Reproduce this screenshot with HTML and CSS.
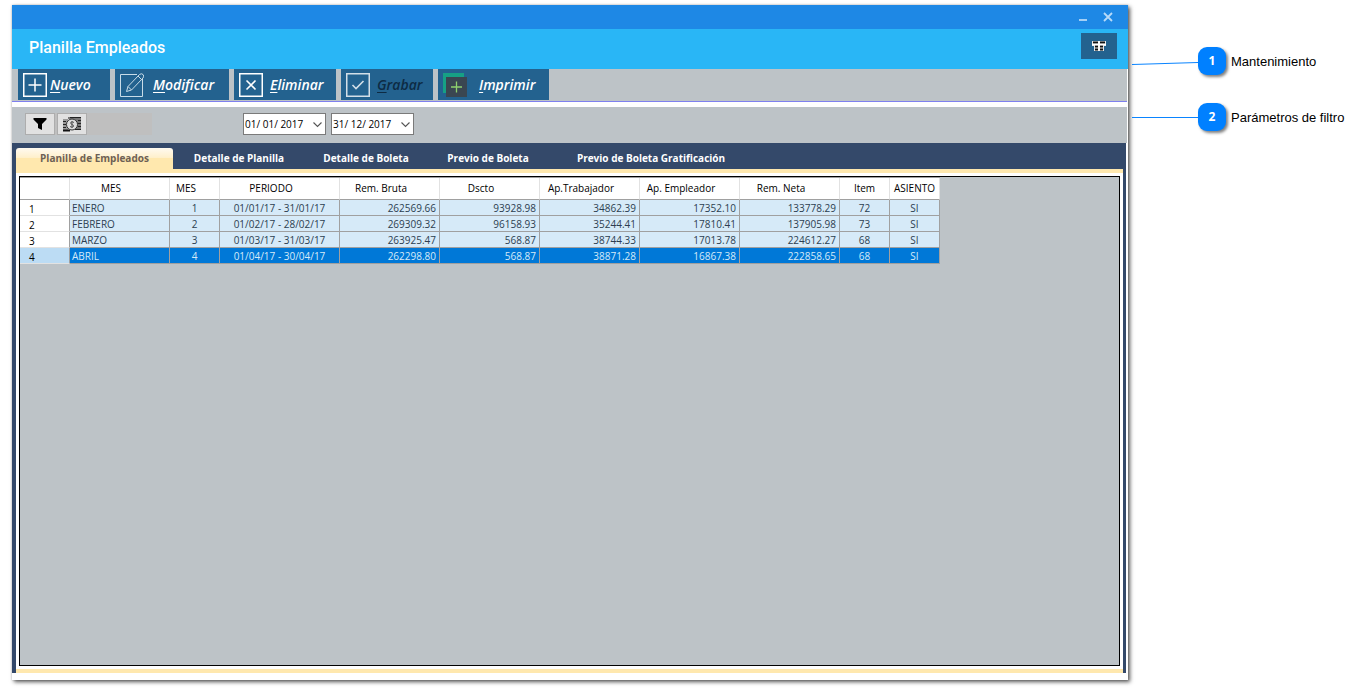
FILE: index.html
```html
<!DOCTYPE html>
<html lang="es">
<head>
<meta charset="utf-8">
<title>Planilla Empleados</title>
<link rel="stylesheet" href="styles.css">
</head>
<body>
<main class="window">
  <div class="titlebar">
    <button class="win-btn" aria-label="Minimizar"><svg width="10" height="10" viewBox="0 0 10 10"><path d="M1 8H9" stroke="#a5cff5" stroke-width="2"/></svg></button>
    <button class="win-btn" aria-label="Cerrar"><svg width="10" height="10" viewBox="0 0 10 10"><path d="M1 1L9 9M9 1L1 9" stroke="#b7daf8" stroke-width="1.8"/></svg></button>
  </div>
  <header class="header">
    <h1 class="heading">Planilla Empleados</h1>
    <button class="layout-btn" aria-label="Columnas">
      <svg width="14" height="10" viewBox="0 0 14 10"><path d="M0 0H14V5H12V10H2V5H0Z" fill="#e8e8e8"/><path d="M1 1.500H6M8 1.500H13M3 5.500H6M8 5.500H11M3 8.500H6M8 8.500H11" stroke="#111" stroke-width="2"/><path d="M0 3.500H14M7 0V10" stroke="#fff" stroke-width="1.4"/></svg>
    </button>
  </header>
  <div class="toolbar">
    <button class="tool tool-new">
      <svg width="24" height="24" viewBox="0 0 24 24" fill="none" stroke="#fff"><rect x=".75" y=".75" width="22.5" height="22.5" stroke-width="1.5"/><path d="M12 5.500V18.500M5.500 12H18.500" stroke-width="1.5"/></svg>
      <span><u>N</u>uevo</span>
    </button>
    <button class="tool tool-edit">
      <svg width="24" height="24" viewBox="0 0 24 24" fill="none" stroke="#c9dce8"><path d="M17 1.500H.5V23.500H22.500V6"/><path d="M6.500 18.500L8 13.500L19.500 1.500Q21.500 0 23 1.500T23 5L11.500 17Z M8 13.500L11.500 17M18 3L21.500 6.500"/></svg>
      <span><u>M</u>odificar</span>
    </button>
    <button class="tool tool-delete">
      <svg width="24" height="24" viewBox="0 0 24 24" fill="none" stroke="#fff"><rect x=".75" y=".75" width="22.5" height="22.5" stroke-width="1.5"/><path d="M7.500 7.500L16.500 16.500M16.500 7.500L7.500 16.500" stroke-width="1.6"/></svg>
      <span><u>E</u>liminar</span>
    </button>
    <button class="tool tool-save" disabled>
      <svg width="24" height="24" viewBox="0 0 24 24" fill="none" stroke="#d3dfe8"><rect x=".75" y=".75" width="22.5" height="22.5" stroke-width="1.5"/><path d="M6.500 12L10 15.500L17.500 8" stroke-width="1.6"/></svg>
      <span><u>G</u>rabar</span>
    </button>
    <button class="tool tool-print">
      <svg width="24" height="24" viewBox="0 0 24 24"><path d="M0 0H21V4H3V20H0Z" fill="#16a085"/><rect x="3" y="4" width="21" height="20" fill="#3a4651"/><path d="M13.500 8.500V19.500M8 14H19" stroke="#8ed16f" stroke-width="1.3"/></svg>
      <span><u>I</u>mprimir</span>
    </button>
  </div>
  <div class="filters">
    <div class="filter-group">
      <button class="filter-btn" aria-label="Filtrar"><svg width="14" height="14" viewBox="0 0 14 14"><path d="M.5 1H13.500V2.500L9 7V13L5 11V7L.5 2.500Z" fill="#000"/></svg></button>
      <button class="filter-btn" aria-label="Pagos"><svg width="18" height="15" viewBox="0 0 18 15"><path d="M5 0H18V12H12V2H5Z" fill="#777"/><path d="M0 2H5V13H0Z" fill="#999"/><path d="M0 13.500H7" stroke="#111" stroke-width="2"/><path d="M7 .5H18M15 3.500H18M15 6.500H18M15 9.500H18M12 12.500H18M0 4.500H3M0 7.500H3M0 10.500H3" stroke="#222"/><circle cx="9" cy="7.500" r="5.500" fill="#ddd" stroke="#333"/><path d="M11 5.500Q9 4 7.700 5.500Q7.500 7 9 7.500Q11 8 10.500 9.500Q9 11 7 9.500M9 4V11" fill="none" stroke="#555"/></svg></button>
    </div>
    <div class="dates">
      <div class="date">
        <select aria-label="Fecha inicial"><option>01/ 01/ 2017</option></select>
        <svg width="9" height="6" viewBox="0 0 9 6"><path d="M.5 .5L4.500 4.500L8.500 .5" fill="none" stroke="#555" stroke-width="1.1"/></svg>
      </div>
      <div class="date">
        <select aria-label="Fecha final"><option>31/ 12/ 2017</option></select>
        <svg width="9" height="6" viewBox="0 0 9 6"><path d="M.5 .5L4.500 4.500L8.500 .5" fill="none" stroke="#555" stroke-width="1.1"/></svg>
      </div>
    </div>
  </div>
  <section class="workspace">
    <div class="tabs" role="tablist">
      <button class="tab tab-list active" role="tab" aria-selected="true">Planilla de Empleados</button>
      <button class="tab tab-detail" role="tab">Detalle de Planilla</button>
      <button class="tab" role="tab">Detalle de Boleta</button>
      <button class="tab" role="tab">Previo de Boleta</button>
      <button class="tab tab-bonus" role="tab">Previo de Boleta Gratificación</button>
    </div>
    <div class="panel">
      <div class="grid">
        <table class="payroll">
          <colgroup><col class="w-narrow"><col class="w-wide"><col class="w-narrow"><col class="w-period"><col class="w-wide"><col class="w-wide"><col class="w-wide"><col class="w-wide"><col class="w-wide"><col class="w-narrow"><col class="w-narrow"></colgroup>
          <thead>
            <tr><th></th><th class="sortable">MES</th><th class="sortable">MES</th><th class="sortable">PERIODO</th><th class="sortable">Rem. Bruta</th><th class="sortable">Dscto</th><th class="sortable">Ap.Trabajador</th><th class="sortable">Ap. Empleador</th><th class="sortable">Rem. Neta</th><th>Item</th><th>ASIENTO</th></tr>
          </thead>
          <tbody>
            <tr><th scope="row">1</th><td class="text">ENERO</td><td>1</td><td>01/01/17 - 31/01/17</td><td class="num">262569.66</td><td class="num">93928.98</td><td class="num">34862.39</td><td class="num">17352.10</td><td class="num">133778.29</td><td>72</td><td>SI</td></tr>
            <tr><th scope="row">2</th><td class="text">FEBRERO</td><td>2</td><td>01/02/17 - 28/02/17</td><td class="num">269309.32</td><td class="num">96158.93</td><td class="num">35244.41</td><td class="num">17810.41</td><td class="num">137905.98</td><td>73</td><td>SI</td></tr>
            <tr><th scope="row">3</th><td class="text">MARZO</td><td>3</td><td>01/03/17 - 31/03/17</td><td class="num">263925.47</td><td class="num">568.87</td><td class="num">38744.33</td><td class="num">17013.78</td><td class="num">224612.27</td><td>68</td><td>SI</td></tr>
            <tr class="selected"><th scope="row">4</th><td class="text">ABRIL</td><td>4</td><td>01/04/17 - 30/04/17</td><td class="num">262298.80</td><td class="num">568.87</td><td class="num">38871.28</td><td class="num">16867.38</td><td class="num">222858.65</td><td>68</td><td>SI</td></tr>
          </tbody>
        </table>
      </div>
    </div>
  </section>
</main>
<aside class="notes">
  <div class="note">
    <svg width="66" height="28" viewBox="0 0 66 28"><path d="M0 17.500L66 15.500" stroke="#0a84ff" stroke-width="1.1"/></svg>
    <span class="badge">1</span><span class="note-text">Mantenimiento</span>
  </div>
  <div class="note">
    <svg width="66" height="28" viewBox="0 0 66 28"><path d="M0 14.500H66" stroke="#0a84ff"/></svg>
    <span class="badge">2</span><span class="note-text">Parámetros de filtro</span>
  </div>
</aside>
</body>
</html>
```
FILE: styles.css
```css
* { box-sizing: border-box; }

body {
  margin: 0;
  padding: 5px 0 9px 12px;
  min-height: 100vh;
  display: flex;
  background: #fff;
  font-family: "Open Sans", "Noto Sans", sans-serif;
  font-size: 10px;
  color: #000;
}

button, select { font: inherit; margin: 0; }
button { border: 0; padding: 0; }
svg { display: block; flex: none; }

.window {
  flex: 1;
  min-width: 0;
  display: flex;
  flex-direction: column;
  background: #fff;
  box-shadow: 2px 2px 4px rgba(0, 0, 0, .65), 0 0 2px rgba(0, 0, 0, .2);
}

.titlebar {
  height: 24px;
  display: flex;
  justify-content: flex-end;
  align-items: center;
  gap: 15px;
  padding-right: 15px;
  background: #1e88e5;
}
.win-btn { background: none; }

.header {
  height: 40px;
  display: flex;
  justify-content: space-between;
  align-items: center;
  padding: 0 11px 6px 17px;
  background: #29b6f6;
}
.heading {
  margin: 0;
  padding-top: 4px;
  font: 500 16px/20px Roboto, sans-serif;
  color: #fff;
}
.layout-btn {
  width: 36px;
  height: 26px;
  display: grid;
  place-items: center;
  background: #23628f;
}

.toolbar {
  display: flex;
  gap: 5px;
  height: 33px;
  padding: 0 6px 1px;
  margin-right: 1px;
  background: #bdc3c7;
  border-bottom: 1px solid #7f80ee;
}
.tool {
  display: flex;
  align-items: center;
  gap: 7px;
  padding: 0 5px;
  background: #23628f;
  color: #fff;
  font-size: 14px;
  font-style: italic;
  font-weight: 600;
}
.tool u { text-underline-offset: 2px; }
.tool:disabled { color: #0d2b44; }
.tool-new { width: 92px; gap: 3px; }
.tool-edit { width: 114px; gap: 9px; }
.tool-delete { width: 102px; }
.tool-save { width: 92px; }
.tool-print { width: 111px; gap: 12px; }

.filters {
  display: flex;
  align-items: center;
  gap: 91px;
  height: 36px;
  margin: 5px 1px 0 0;
  padding: 0 0 2px 13px;
  background: #bdc3c7;
}
.filter-group {
  display: flex;
  gap: 2px;
  width: 127px;
  background: #bfbfbf;
}
.filter-btn {
  width: 30px;
  height: 22px;
  display: grid;
  place-items: center;
  background: #e1e1e1;
  border: 1px solid #adadad;
}
.dates { display: flex; gap: 5px; }
.date { position: relative; }
.date select {
  appearance: none;
  display: block;
  width: 83px;
  height: 22px;
  padding: 0 1px;
  border: 1px solid #7a7a7a;
  border-radius: 0;
  background: #fff;
  color: #000;
}
.date svg {
  position: absolute;
  right: 4px;
  top: 9px;
  pointer-events: none;
}

.workspace {
  flex: 1;
  display: flex;
  flex-direction: column;
  margin: 0 2px 7px 0;
  padding: 0 3px 0 4px;
  background: #34496a;
}
.tabs {
  display: flex;
  height: 26px;
  padding-top: 5px;
}
.tab {
  width: 122px;
  padding-bottom: 2px;
  background: none;
  color: #fff;
  font-weight: 700;
  white-space: nowrap;
}
.tab-list { width: 157px; }
.tab-detail { width: 132px; }
.tab-bonus { width: 204px; }
.tab.active {
  border-radius: 3px 3px 0 0;
  background: linear-gradient(#fffaf0, #fff0cc 45%, #ffe8ae 50%, #ffe8ae);
  color: #6d6055;
}
.panel {
  flex: 1;
  display: flex;
  padding: 3px;
  background: #fff;
  border: solid #ffe8ae;
  border-width: 4px 0;
}
.grid {
  flex: 1;
  border: 1px solid #000;
  background: #bdc3c7;
}

.payroll {
  table-layout: fixed;
  width: 920px;
  border-spacing: 0;
  border-top: 1px solid #a0a0a0;
  line-height: 15px;
}
.w-narrow { width: 50px; }
.w-wide { width: 100px; }
.w-period { width: 120px; }
.payroll th, .payroll td {
  padding: 0;
  border: solid #a0a0a0;
  border-width: 0 1px 1px 0;
  text-align: center;
  white-space: nowrap;
}
.payroll th { font-weight: 400; background: #fff; }
.payroll thead th {
  height: 22px;
  border-right-color: #e2e2e2;
}
.payroll thead .sortable { padding-right: 17px; }
.payroll tbody th {
  padding: 4px 0 0 9px;
  line-height: 11px;
  border-bottom-color: #e2e2e2;
  text-align: left;
}
.payroll td {
  padding-top: 2px;
  line-height: 13px;
  background: #d6eaf8;
  color: #2c3e50;
}
.payroll .text { padding-left: 2px; text-align: left; }
.payroll .num { padding-right: 3px; text-align: right; }
.payroll .selected td { background: #0078d7; color: #d6eaf8; }
.payroll .selected th { background: #bcdcf4; }

.notes {
  width: 232px;
  flex: none;
  display: flex;
  flex-direction: column;
  gap: 28px;
  padding: 42px 0 0 4px;
  font: 13px/16px "Liberation Sans", Arial, sans-serif;
}
.note { display: flex; align-items: center; white-space: nowrap; }
.note-text { padding-top: 2px; }
.badge {
  width: 28px;
  height: 28px;
  margin-right: 5px;
  border-radius: 9px;
  background: #0080ff;
  box-shadow: 2px 2px 3px rgba(0, 0, 0, .5);
  color: #fff;
  font: 700 12px/28px "Open Sans", sans-serif;
  text-align: center;
}
```
